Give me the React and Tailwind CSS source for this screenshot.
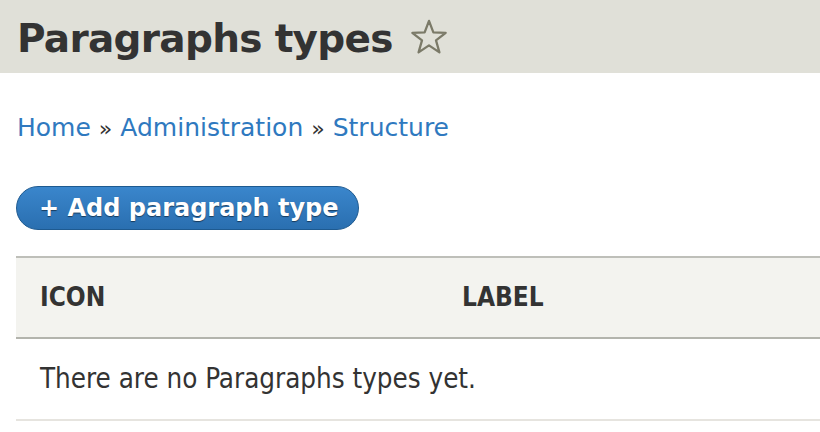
import React from 'react';

const Star = () => (
    <svg viewBox="0 0 40 38" className="w-[38px] h-[36px]" fill="none">
        <path
            d="M20 2 L24.6 14.2 L37.6 14.6 L27.4 22.6 L31 35.2 L20 27.8 L9 35.2 L12.6 22.6 L2.4 14.6 L15.4 14.2 Z"
            stroke="#7b7a68"
            strokeWidth="2.4"
            strokeLinejoin="round"
        />
    </svg>
);

export default function App() {
    return (
        <div className="w-[820px] h-[432px] overflow-hidden bg-white text-[#333] font-['DejaVu_Sans',sans-serif]">
            <div className="h-[73px] bg-[#e0e0d8] flex items-center pl-[17px] gap-[17px]">
                <h1 className="text-[39px] font-bold leading-none tracking-[-0.7px] text-[#333] pt-[4px]">Paragraphs types</h1>
                <Star />
            </div>

            <div className="pl-[16px]">
                <nav className="mt-[42px] text-[25px] leading-none text-[#2f79bf] pl-[1px]">
                    <a>Home</a>
                    <span className="text-[#333] text-[22px] mx-[8px]">»</span>
                    <a>Administration</a>
                    <span className="text-[#333] text-[22px] mx-[8px]">»</span>
                    <a>Structure</a>
                </nav>

                <button className="mt-[46px] h-[44px] w-[343px] rounded-full border border-[#1e5a90] bg-gradient-to-b from-[#3a86cc] to-[#2a6fb0] text-white text-[24px] font-bold leading-none flex items-center pl-[22px] [text-shadow:0_1px_1px_rgba(0,0,0,0.5)]">
                    + Add paragraph type
                </button>

                <div className="mt-[26px] font-['DejaVu_Sans_Condensed',sans-serif]">
                    <div className="h-[83px] bg-[#f3f3ef] border-t-2 border-b-2 border-t-[#bebfb9] border-b-[#b3b4ad] flex items-center text-[26px] font-bold uppercase">
                        <div className="w-[446px] pl-[24px]">Icon</div>
                        <div>Label</div>
                    </div>
                    <div className="h-[82px] border-b-2 border-[#e6e4df] flex items-center pl-[24px] text-[27.5px]">
                        There are no Paragraphs types yet.
                    </div>
                </div>
            </div>
        </div>
    );
}
